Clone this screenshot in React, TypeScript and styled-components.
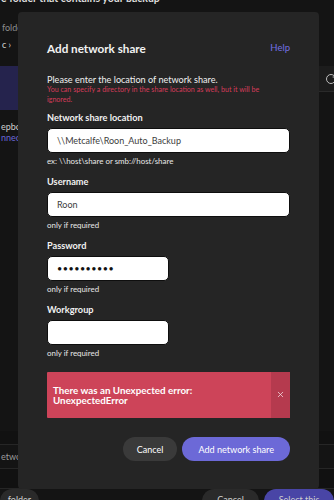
import styled, { createGlobalStyle } from "styled-components";
import { RotateCw, X } from "lucide-react";

const GlobalStyle = createGlobalStyle`
  html, body {
    margin: 0;
    padding: 0;
    background: #141414;
  }
  * {
    box-sizing: border-box;
  }
  body {
    font-family: Lato, "Open Sans", sans-serif;
  }
`;

const Page = styled.div`
  position: relative;
  width: 334px;
  height: 500px;
  overflow: hidden;
  background: #141414;
  color: #e6e6e6;
`;

const Backdrop = styled.div`
  display: flex;
  flex-direction: column;
  height: 100%;
`;

const BgTitle = styled.div`
  margin-top: -9px;
  padding-left: 1px;
  font-size: 10.5px;
  line-height: 14px;
  font-weight: 700;
  color: #dcdcdc;
  white-space: nowrap;
`;

const Crumb = styled.div<{ $muted?: boolean }>`
  padding-left: 2px;
  font-size: 9px;
  line-height: 12px;
  color: ${(p) => (p.$muted ? "#8e8e8e" : "#d8d8d8")};
  white-space: nowrap;
`;

const ListRow = styled.div`
  display: flex;
  margin-top: 15px;
  height: 44px;
`;

const SelectedItem = styled.div`
  flex: 1;
  background: #25234d;
`;

const ToolStrip = styled.div`
  width: 15px;
  height: 26px;
  display: flex;
  align-items: center;
  justify-content: flex-end;
  background: #1c1c1c;
  border-bottom: 1px solid #2a2a2a;
  color: #bdbdbd;
  overflow: hidden;
`;

const ItemName = styled.div<{ $link?: boolean }>`
  padding-left: 1px;
  font-size: 9px;
  line-height: 11px;
  color: ${(p) => (p.$link ? "#6a67d6" : "#cfcfcf")};
  white-space: nowrap;
`;

const Spacer = styled.div`
  flex: 1;
`;

const BgRow = styled.div<{ $h: number; $dark?: boolean }>`
  height: ${(p) => p.$h}px;
  display: flex;
  align-items: center;
  padding-left: 1px;
  background: ${(p) => (p.$dark ? "#111111" : "#141414")};
  border-bottom: 1px solid #262626;
  font-size: 9px;
  color: #9c9c9c;
  white-space: nowrap;
`;

const BgBar = styled.div`
  display: flex;
  align-items: flex-start;
  gap: 5px;
  height: 11px;
`;

const BgButton = styled.div<{ $primary?: boolean; $w: number }>`
  width: ${(p) => p.$w}px;
  height: 24px;
  border-radius: 12px;
  padding-top: 5px;
  text-align: center;
  font-size: 9px;
  color: #cfcfcf;
  background: ${(p) => (p.$primary ? "#4945a6" : "#2a2a2a")};
  white-space: nowrap;
`;

const Modal = styled.div`
  position: absolute;
  left: 18px;
  top: 12px;
  width: 301px;
  height: 477px;
  background: #252525;
  border-radius: 4px;
  padding: 28px 29px 28px 29px;
  display: flex;
  flex-direction: column;
`;

const Header = styled.div`
  display: flex;
  justify-content: space-between;
  align-items: center;
  height: 16px;
`;

const Title = styled.h1`
  margin: 0;
  font-size: 11.7px;
  font-weight: 700;
  color: #f2f2f2;
`;

const HelpLink = styled.a`
  font-size: 9.5px;
  color: #7370e2;
  text-decoration: none;
`;

const Intro = styled.p`
  margin: 18px 0 0;
  font-size: 9.1px;
  line-height: 11px;
  color: #f0f0f0;
`;

const Warning = styled.p`
  margin: 0;
  max-width: 232px;
  font-size: 7.1px;
  line-height: 10px;
  color: #d63c5a;
`;

const Fields = styled.div`
  display: flex;
  flex-direction: column;
  gap: 10px;
  margin-top: 7px;
`;

const Field = styled.div`
  display: flex;
  flex-direction: column;
`;

const Label = styled.label`
  font-size: 9.2px;
  line-height: 12px;
  font-weight: 700;
  color: #f2f2f2;
`;

const Input = styled.div<{ $short?: boolean }>`
  margin-top: 4px;
  width: ${(p) => (p.$short ? "122px" : "243px")};
  height: 25px;
  background: #ffffff;
  border: 1px solid #0e0e0e;
  border-radius: 5px;
  padding-left: 9px;
  display: flex;
  align-items: center;
  font-size: 9px;
  color: #3c3c3c;
`;

const Dots = styled.span`
  font-size: 9px;
  letter-spacing: 0.5px;
  color: #111;
`;

const Hint = styled.div`
  margin-top: 3px;
  font-size: 7.9px;
  line-height: 10px;
  color: #e8e8e8;
`;

const ErrorBox = styled.div`
  margin-top: 14px;
  display: flex;
  height: 47px;
  background: #cd4459;
  border-radius: 1px;
`;

const ErrorText = styled.div`
  flex: 1;
  padding: 13px 0 0 6px;
  font-size: 9.8px;
  line-height: 10.5px;
  font-weight: 700;
  color: #ffffff;
`;

const CloseStrip = styled.div`
  width: 19px;
  display: flex;
  align-items: center;
  justify-content: center;
  background: #b53a4e;
  color: #f3dde1;
`;

const Actions = styled.div`
  margin-top: 19px;
  display: flex;
  justify-content: flex-end;
  gap: 5px;
`;

const Button = styled.button<{ $primary?: boolean }>`
  height: 24px;
  padding: 0 ${(p) => (p.$primary ? "16px" : "14px")};
  border: none;
  border-radius: 12px;
  font-family: Lato, sans-serif;
  font-size: ${(p) => (p.$primary ? "9.1px" : "9px")};
  color: #ffffff;
  background: ${(p) => (p.$primary ? "#6c69d7" : "#3a3a3a")};
`;

export default function App() {
  return (
    <Page>
      <GlobalStyle />
      <Backdrop>
        <BgTitle>e folder that contains your backup</BgTitle>
        <Crumb $muted style={{ marginTop: 17 }}>
          folders
        </Crumb>
        <Crumb style={{ marginTop: 5 }}>c ›</Crumb>
        <ListRow>
          <SelectedItem />
          <ToolStrip>
            <RotateCw size={12} strokeWidth={2} style={{ marginRight: -3 }} />
          </ToolStrip>
        </ListRow>
        <ItemName style={{ marginTop: 11 }}>epbox</ItemName>
        <ItemName $link>nnect</ItemName>
        <Spacer />
        <BgRow $h={14} $dark />
        <BgRow $h={24}>etwork</BgRow>
        <BgRow $h={20} $dark />
        <BgBar>
          <BgButton $w={39}>folder</BgButton>
          <Spacer />
          <BgButton $w={57}>Cancel</BgButton>
          <BgButton $primary $w={70}>
            Select this
          </BgButton>
        </BgBar>
      </Backdrop>

      <Modal>
        <Header>
          <Title>Add network share</Title>
          <HelpLink>Help</HelpLink>
        </Header>
        <Intro>Please enter the location of network share.</Intro>
        <Warning>
          You can specify a directory in the share location as well, but it will be
          ignored.
        </Warning>
        <Fields>
          <Field>
            <Label>Network share location</Label>
            <Input>\\Metcalfe\Roon_Auto_Backup</Input>
            <Hint>ex: \\host\share or smb://host/share</Hint>
          </Field>
          <Field>
            <Label>Username</Label>
            <Input>Roon</Input>
            <Hint>only if required</Hint>
          </Field>
          <Field>
            <Label>Password</Label>
            <Input $short>
              <Dots>••••••••••</Dots>
            </Input>
            <Hint>only if required</Hint>
          </Field>
          <Field>
            <Label>Workgroup</Label>
            <Input $short />
            <Hint>only if required</Hint>
          </Field>
        </Fields>
        <ErrorBox>
          <ErrorText>
            There was an Unexpected error:
            <br />
            UnexpectedError
          </ErrorText>
          <CloseStrip>
            <X size={9} strokeWidth={2} />
          </CloseStrip>
        </ErrorBox>
        <Actions>
          <Button>Cancel</Button>
          <Button $primary>Add network share</Button>
        </Actions>
      </Modal>
    </Page>
  );
}
